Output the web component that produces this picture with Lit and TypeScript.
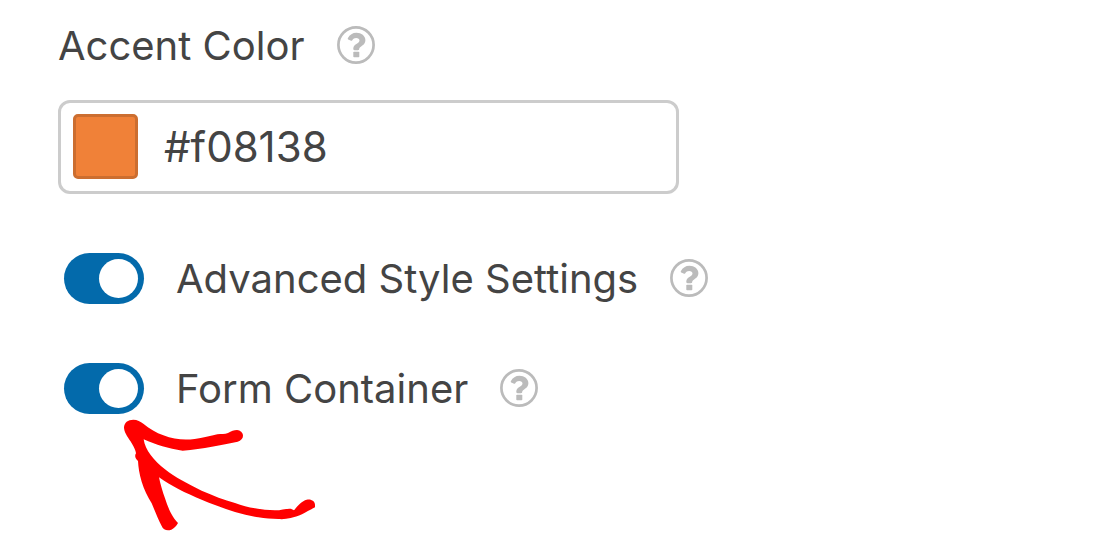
import { LitElement, html, css } from "lit";
import { customElement, property, state } from "lit/decorators.js";

@customElement("help-icon")
export class HelpIcon extends LitElement {
  @property() topic = "";

  static styles = css`
    :host {
      display: inline-flex;
      padding-bottom: 2px;
    }
    .help {
      display: block;
      width: 38px;
      height: 38px;
      padding: 0;
      border: 0;
      background: none;
      color: #bbbbbb;
      cursor: pointer;
    }
    .icon {
      display: block;
      width: 38px;
      height: 38px;
    }
  `;

  render() {
    return html`<button class="help" type="button" aria-label="Help: ${this.topic}">
      <svg class="icon" viewBox="0 0 38 38" aria-hidden="true">
        <circle cx="19" cy="19" r="17.6" fill="none" stroke="currentColor" stroke-width="2.7" />
        <path
          fill="currentColor"
          d="M10.8 12.2C12.8 8.7 15.6 6.8 19.4 6.8C24.4 6.8 28.4 9.9 28.4 14.2C28.4 19.8 22.2 20 22.2 23C22.2 23.8 21.6 24.2 20.9 24.2H17.5C16.8 24.2 16.3 23.7 16.3 23V22.4C16.3 18.2 22.5 17.5 22.5 14.5C22.5 12.9 21.1 12 19.2 12C17.3 12 16.4 12.8 15.1 14.4C14.7 14.9 14.1 15 13.6 14.6L11.2 13.5C10.8 13.2 10.6 12.7 10.8 12.2Z"
        />
        <rect x="16.3" y="25.8" width="6" height="5.4" rx="0.8" fill="currentColor" />
      </svg>
    </button>`;
  }
}

@customElement("toggle-field")
export class ToggleField extends LitElement {
  @property() label = "";
  @property({ type: Boolean }) checked = false;

  static styles = css`
    :host {
      display: flex;
      align-items: center;
      gap: 32px;
      padding-left: 6px;
    }
    .label {
      display: flex;
      align-items: center;
      gap: 32px;
      cursor: pointer;
    }
    .switch {
      appearance: none;
      flex: none;
      box-sizing: border-box;
      display: flex;
      justify-content: flex-start;
      width: 80px;
      height: 51px;
      margin: 0;
      padding: 6px;
      border-radius: 26px;
      background: #b0b6bd;
      cursor: pointer;
    }
    .switch::before {
      content: "";
      width: 39px;
      height: 39px;
      border-radius: 50%;
      background: #ffffff;
    }
    .switch:checked {
      justify-content: flex-end;
      background: #036aab;
    }
  `;

  private onChange(event: Event) {
    this.checked = (event.target as HTMLInputElement).checked;
  }

  render() {
    return html`
      <label class="label">
        <input
          class="switch"
          type="checkbox"
          role="switch"
          .checked=${this.checked}
          @change=${this.onChange}
        />
        <span>${this.label}</span>
      </label>
      <help-icon .topic=${this.label}></help-icon>
    `;
  }
}

@customElement("app-root")
export class AppRoot extends LitElement {
  @state() private color = "#f08138";

  static styles = css`
    :host {
      display: block;
      box-sizing: border-box;
      min-height: 100vh;
      padding: 21px 58px 0;
      background: #ffffff;
      color: #444444;
      font-family: Inter, "Liberation Sans", sans-serif;
      font-size: 40px;
      line-height: 50px;
    }
    .heading {
      display: flex;
      align-items: center;
      gap: 32px;
    }
    .color-box {
      box-sizing: border-box;
      display: flex;
      align-items: center;
      gap: 26px;
      max-width: 621px;
      margin-top: 29px;
      padding: 11px 12px 12px;
      border: 3px solid #cccccc;
      border-radius: 12px;
    }
    .swatch {
      flex: none;
      box-sizing: border-box;
      width: 65px;
      height: 65px;
      padding: 0;
      border: 3px solid #cc6e30;
      border-radius: 5px;
      cursor: pointer;
    }
    .value {
      flex: 1;
      min-width: 0;
      padding: 0;
      border: 0;
      outline: 0;
      background: none;
      color: inherit;
      font: inherit;
      font-size: 42px;
    }
    .toggles {
      display: grid;
      gap: 59px;
      margin-top: 59px;
    }
    .pointed {
      position: relative;
    }
    .arrow {
      position: absolute;
      left: 42px;
      top: 37px;
      width: 240px;
      height: 140px;
      pointer-events: none;
    }
  `;

  private onInput(event: Event) {
    this.color = (event.target as HTMLInputElement).value;
  }

  render() {
    return html`
      <div class="heading">
        <label for="accent">Accent Color</label>
        <help-icon topic="Accent Color"></help-icon>
      </div>
      <div class="color-box">
        <button
          class="swatch"
          type="button"
          aria-label="Pick accent color"
          style="background-color: ${this.color}"
        ></button>
        <input
          id="accent"
          class="value"
          type="text"
          spellcheck="false"
          .value=${this.color}
          @input=${this.onInput}
        />
      </div>
      <div class="toggles">
        <toggle-field label="Advanced Style Settings" checked></toggle-field>
        <div class="pointed">
          <toggle-field label="Form Container" checked></toggle-field>
          <svg class="arrow" viewBox="0 0 720 420" aria-hidden="true">
            <path
              fill="#ff0000"
              d="M72 84C72 67 84 59 100 59C112 59 121 64 130 71C150 87 168 98 190 106C222 119 255 121 284 117C308 114 332 107 352 103C364 101 374 104 384 99C394 93 402 90 411 90C421 91 429 98 429 107C429 115 423 121 413 125C365 134 310 147 248 152C205 146 168 134 131 118C135 150 162 182 195 208C210 220 227 231 245 241C264 252 284 262 305 272C340 287 372 300 405 309C425 316 446 322 465 325C485 329 505 331 525 331C542 331 556 326 568 326C574 326 578 328 582 331C594 316 606 303 620 299C634 296 645 304 645 314V322C634 328 618 336 606 343C594 349 583 351 572 354C560 357 548 358 535 357C515 357 495 355 475 352C451 348 428 342 405 336C385 330 365 323 345 315C331 310 318 305 305 299C281 289 258 279 235 267C215 257 196 245 177 232C181 253 188 275 195 295C200 311 206 326 213 340C219 352 227 362 234 369C229 379 222 384 214 389C202 394 190 390 185 378C174 357 164 331 155 310C143 290 132 268 125 245C118 222 115 202 114 183C106 176 103 168 108 160C107 150 102 142 96 131C86 114 74 102 72 84Z"
            />
          </svg>
        </div>
      </div>
    `;
  }
}
